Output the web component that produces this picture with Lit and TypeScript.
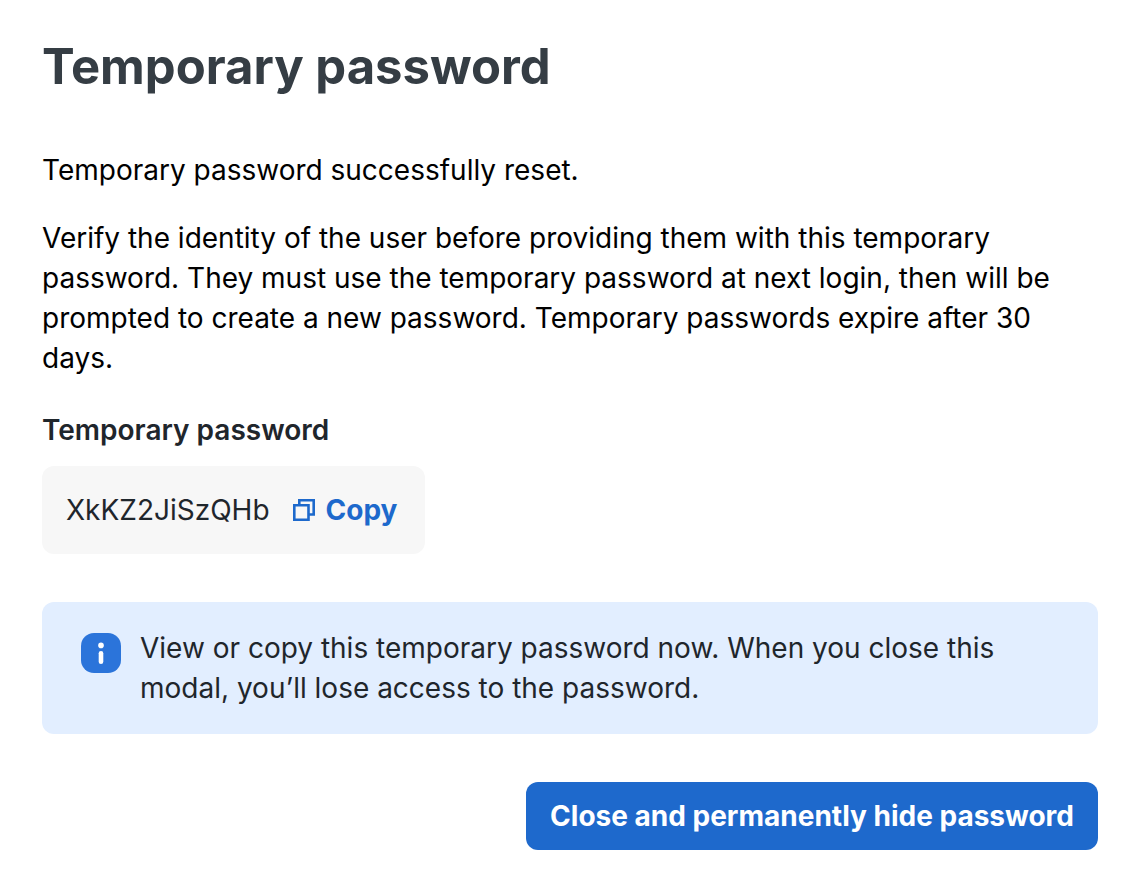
import { LitElement, html, css } from "lit";
import { customElement, property } from "lit/decorators.js";

@customElement("app-root")
class AppRoot extends LitElement {
  @property() password = "XkKZ2JiSzQHb";

  static styles = css`
    :host {
      display: block;
      background: #fff;
      color: #000;
      font: 400 28px/40px Inter, sans-serif;
    }
    *, *::before { box-sizing: border-box; }
    .modal { padding: 36px 42px 42px; }
    h1 {
      margin: 0 0 52px;
      font: 700 49px/62px Inter, sans-serif;
      color: #353d44;
    }
    p { margin: 0 0 28px; }
    .body { margin-bottom: 32px; }
    .label { font-weight: 600; color: #1f262c; margin: 0 0 16px; }
    .secret {
      display: inline-flex;
      align-items: center;
      gap: 22px;
      padding: 24px 28px 24px 24px;
      border-radius: 12px;
      background: #f7f7f7;
      color: #1f262c;
      vertical-align: top;
    }
    .copy {
      display: inline-flex;
      align-items: center;
      gap: 10px;
      border: 0;
      padding: 0;
      background: none;
      color: #1d69cc;
      font: 700 28px/40px Inter, sans-serif;
      cursor: pointer;
    }
    .notice {
      display: flex;
      align-items: flex-start;
      gap: 19px;
      margin: 48px 0;
      padding: 26px 39px;
      border-radius: 12px;
      background: #e2eeff;
      color: #1f262c;
    }
    .notice p { margin: 0; }
    .notice svg { flex: none; margin-top: 5px; }
    .actions { display: flex; justify-content: flex-end; }
    .close {
      border: 0;
      border-radius: 12px;
      padding: 14px 24px;
      background: #1e69cc;
      color: #fff;
      font: 700 28px/40px Inter, sans-serif;
      cursor: pointer;
    }
  `;

  private copy() {
    navigator.clipboard?.writeText(this.password);
  }

  private close() {
    this.dispatchEvent(new CustomEvent("close"));
  }

  render() {
    return html`
      <main class="modal" role="dialog" aria-labelledby="title">
        <h1 id="title">Temporary password</h1>
        <p>Temporary password successfully reset.</p>
        <p class="body">Verify the identity of the user before providing them with this temporary password. They must use the temporary password at next login, then will be prompted to create a new password. Temporary passwords expire after 30 days.</p>
        <p class="label" id="label">Temporary password</p>
        <div class="secret">
          <span aria-labelledby="label">${this.password}</span>
          <button class="copy" @click=${this.copy}>
            <svg width="24" height="24" viewBox="0 0 24 24" fill="none" stroke="currentColor" stroke-width="2.6" aria-hidden="true">
              <path d="M7.3 7V2.3h14.4v14.2h-5" />
              <path d="M2.3 7.3h14.2v14.4H2.3z" />
            </svg>
            Copy
          </button>
        </div>
        <div class="notice" role="status">
          <svg width="40" height="40" viewBox="0 0 40 40" aria-hidden="true">
            <rect width="40" height="40" rx="13" fill="#2b74da" />
            <circle cx="20" cy="12.4" r="2.8" fill="#fff" />
            <path d="M20 20.2v8.6" stroke="#fff" stroke-width="4.6" stroke-linecap="round" />
          </svg>
          <p>View or copy this temporary password now. When you close this modal, you’ll lose access to the password.</p>
        </div>
        <div class="actions">
          <button class="close" @click=${this.close}>Close and permanently hide password</button>
        </div>
      </main>
    `;
  }
}
